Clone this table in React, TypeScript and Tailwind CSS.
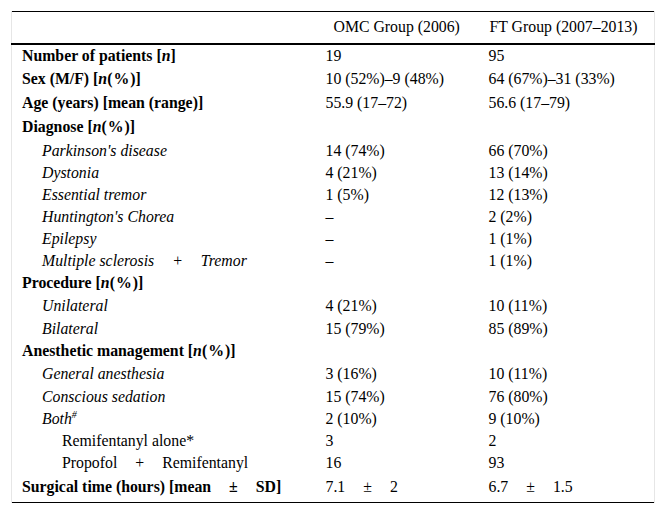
import type { ReactNode } from 'react';

type Row = {
  label: ReactNode;
  level: 0 | 1 | 2;
  omc?: ReactNode;
  ft?: ReactNode;
  h?: string;
};

const N = () => (
  <>
    [<i>n</i>(<span className="px-[1px]">%</span>)]
  </>
);

const Op = ({ c }: { c: string }) => <span className="px-[18px]">{c}</span>;

const rows: Row[] = [
  { label: <>Number of patients [<i>n</i>]</>, level: 0, omc: '19', ft: '95', h: 'h-[24px]' },
  { label: <>Sex (M/F) <N /></>, level: 0, omc: '10 (52%)–9 (48%)', ft: '64 (67%)–31 (33%)', h: 'h-[23px]' },
  { label: 'Age (years) [mean (range)]', level: 0, omc: '55.9 (17–72)', ft: '56.6 (17–79)', h: 'h-[24px]' },
  { label: <>Diagnose <N /></>, level: 0, h: 'h-[25px]' },
  { label: "Parkinson's disease", level: 1, omc: '14 (74%)', ft: '66 (70%)' },
  { label: 'Dystonia', level: 1, omc: '4 (21%)', ft: '13 (14%)' },
  { label: 'Essential tremor', level: 1, omc: '1 (5%)', ft: '12 (13%)' },
  { label: "Huntington's Chorea", level: 1, omc: '–', ft: '2 (2%)' },
  { label: 'Epilepsy', level: 1, omc: '–', ft: '1 (1%)' },
  { label: <>Multiple sclerosis<Op c="+" />Tremor</>, level: 1, omc: '–', ft: '1 (1%)' },
  { label: <>Procedure <N /></>, level: 0, h: 'h-[23px]' },
  { label: 'Unilateral', level: 1, omc: '4 (21%)', ft: '10 (11%)', h: 'h-[23px]' },
  { label: 'Bilateral', level: 1, omc: '15 (79%)', ft: '85 (89%)' },
  { label: <>Anesthetic management <N /></>, level: 0, h: 'h-[23px]' },
  { label: 'General anesthesia', level: 1, omc: '3 (16%)', ft: '10 (11%)', h: 'h-[23px]' },
  { label: 'Conscious sedation', level: 1, omc: '15 (74%)', ft: '76 (80%)' },
  {
    label: (
      <>
        Both<span className="relative -top-[6px] text-[10px]">#</span>
      </>
    ),
    level: 1,
    omc: '2 (10%)',
    ft: '9 (10%)',
  },
  { label: 'Remifentanyl alone*', level: 2, omc: '3', ft: '2' },
  { label: <>Propofol<Op c="+" />Remifentanyl</>, level: 2, omc: '16', ft: '93' },
  {
    label: <>Surgical time (hours) [mean<Op c="±" />SD]</>,
    level: 0,
    omc: <>7.1<Op c="±" />2</>,
    ft: <>6.7<Op c="±" />1.5</>,
    h: 'h-[29px] [&>td]:pb-[1px]',
  },
];

export default function App() {
  return (
    <div className="min-h-[515px] w-[665px] bg-white pl-[11px] pt-[11px] font-[Liberation_Serif,serif] text-[15.8px] leading-none text-black">
      <table className="w-[644px] border-collapse">
        <thead>
          <tr className="h-[32px] border-t border-b-2 border-black">
            <th className="w-[307px] border-l border-[#e6e6e6] border-t-black border-b-black" />
            <th className="w-[161px] pl-[15px] text-left font-normal">OMC Group (2006)</th>
            <th className="border-r border-[#e6e6e6] pl-[10px] text-left font-normal border-t-black border-b-black">
              FT Group (2007–2013)
            </th>
          </tr>
        </thead>
        <tbody className="border-b border-black">
          {rows.map((r, i) => (
            <tr key={i} className={r.h ?? 'h-[22px]'}>
              <td
                className={
                  'border-l border-[#e6e6e6] ' +
                  (r.level === 0
                    ? 'pl-[10px] font-bold'
                    : r.level === 1
                      ? 'pl-[30px] italic'
                      : 'pl-[50px]')
                }
              >
                {r.label}
              </td>
              <td className="pl-[7px]">{r.omc}</td>
              <td className="border-r border-[#e6e6e6] pl-[9px]">{r.ft}</td>
            </tr>
          ))}
        </tbody>
      </table>
    </div>
  );
}
